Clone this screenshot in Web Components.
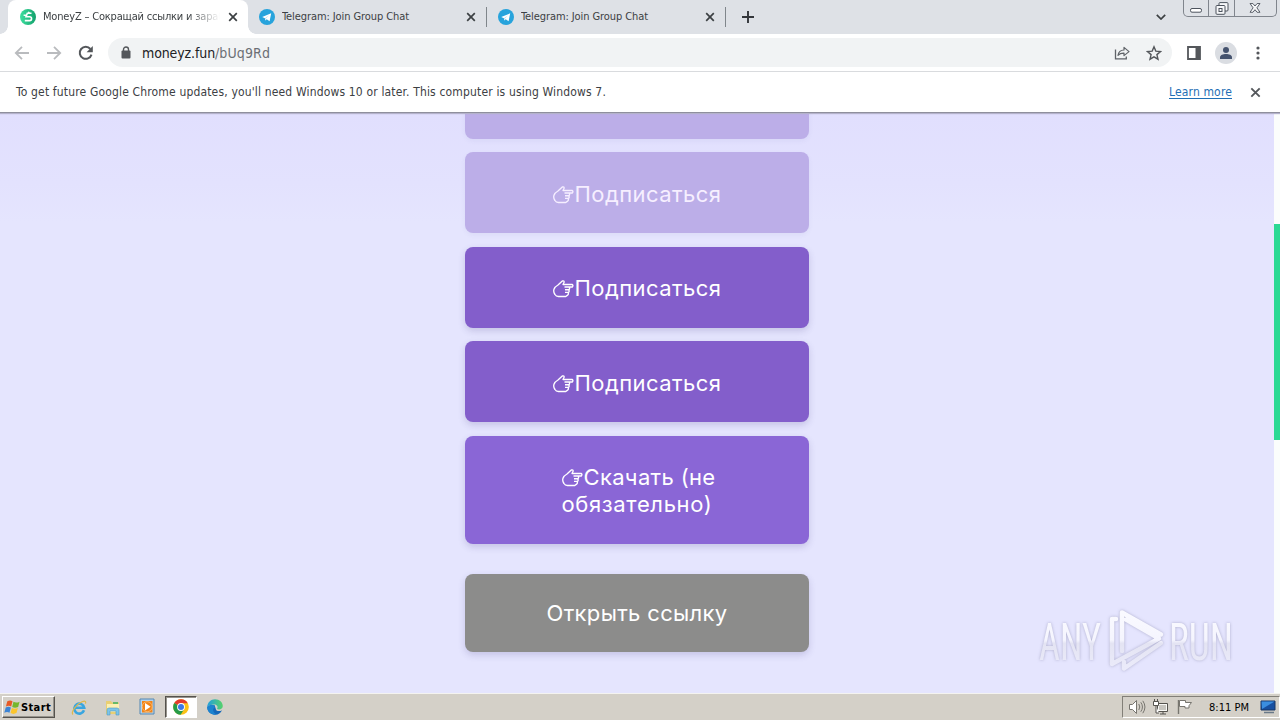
<!DOCTYPE html>
<html lang="ru">
<head>
<meta charset="utf-8">
<title>MoneyZ</title>
<style>
html,body{margin:0;height:100%;overflow:hidden}
body{font-family:"DejaVu Sans Condensed","DejaVu Sans",sans-serif;font-stretch:condensed}
</style>
</head>
<body>
<desktop-screen></desktop-screen>
<script>
const define = (name, html, after) => customElements.define(name, class extends HTMLElement {
  connectedCallback() {
    if (this.shadowRoot) return;
    const t = document.createElement('template');
    t.innerHTML = html;
    this.attachShadow({mode: 'open'}).append(t.content.cloneNode(true));
    if (after) after(this);
  }
});

/* Line of text whose tracking is set so that it fills the width in its "w" attribute. */
define('fit-text', `<style>:host{display:block;white-space:pre;flex:none}span{display:inline-block;text-decoration:inherit}</style><span><slot></slot></span>`, el => {
  const span = el.shadowRoot.querySelector('span');
  const w = +el.getAttribute('w');
  el.style.width = w + 'px';
  const fit = () => {
    span.style.letterSpacing = '0px';
    const natural = span.getBoundingClientRect().width;
    const n = el.textContent.length;
    if (natural && n) span.style.letterSpacing = ((w - natural) / n) + 'px';
  };
  queueMicrotask(fit);
});

const icons = {
  close: ['0 0 10 10', '<path d="M1.2 1.2l7.6 7.6M8.8 1.2L1.2 8.8" stroke="currentColor" stroke-width="1.7"/>'],
  plus: ['0 0 12 12', '<path d="M6 0v12M0 6h12" stroke="currentColor" stroke-width="1.9"/>'],
  money: ['0 0 16 16', '<defs><linearGradient id="g" x2="1"><stop stop-color="#3fe0a0"/><stop offset="1" stop-color="#12a06b"/></linearGradient></defs><circle cx="8" cy="8" r="8" fill="url(#g)"/><path d="M11.5 4.3H7.3L6 7.7h3.6a1.9 1.9 0 0 1 0 3.9H4.8M3.6 6.2h3M9 2.8l-.5 2" fill="none" stroke="#fff" stroke-width="1.6"/>'],
  telegram: ['0 0 16 16', '<circle cx="8" cy="8" r="8" fill="#27a3dc"/><path d="M3.2 7.9l9-3.6-1.6 8-2.9-2.1-1.4 1.4-.4-2.4z" fill="#fff"/><path d="M5.9 9.2l4.2-3-3.4 3.6-.3 1.6z" fill="#b9dcf0"/>'],
  chevron: ['0 0 10 6', '<path d="M.8.8L5 5 9.2.8" fill="none" stroke="#3c4043" stroke-width="1.7"/>'],
  back: ['0 0 16 16', '<path d="M15 8H2M8 1.8L1.8 8 8 14.2" fill="none" stroke="#b9bbbe" stroke-width="1.8"/>'],
  forward: ['0 0 16 16', '<path d="M1 8h13M8 1.8L14.2 8 8 14.2" fill="none" stroke="#b9bbbe" stroke-width="1.8"/>'],
  reload: ['0 0 16 16', '<path d="M13.5 9.6A6 6 0 1 1 12.4 4" fill="none" stroke="#54575b" stroke-width="2"/><path d="M14.8 1v6.2H8.6z" fill="#54575b"/>'],
  lock: ['0 0 10 13', '<rect x=".5" y="4.5" width="9" height="8" rx="1" fill="#54575b"/><path d="M2.5 5V3.5a2.5 2.5 0 0 1 5 0V5" fill="none" stroke="#54575b" stroke-width="1.4"/>'],
  share: ['0 0 16 16', '<path d="M1.5 4.5v9.3h10.8v-2.3" fill="none" stroke="#5f6368" stroke-width="1.3"/><path d="M4 10.3c.6-3.6 2.7-5.2 6-5.3V2.4L15 6.6l-5 4V8.1C7.3 8 5.5 8.7 4 10.3z" fill="none" stroke="#5f6368" stroke-width="1.2" stroke-linejoin="round"/>'],
  star: ['0 0 16 16', '<path d="M8 1.8l1.8 4.3 4.7.4-3.6 3.1 1.1 4.6L8 11.8l-4 2.4 1.1-4.6L1.5 6.5l4.7-.4z" fill="none" stroke="#54575b" stroke-width="1.4"/>'],
  panel: ['0 0 14 14', '<path d="M1 1h12v12H1z" fill="none" stroke="#54575b" stroke-width="1.8"/><path d="M8.5 1H13v12H8.5z" fill="#54575b"/>'],
  avatar: ['0 0 22 22', '<circle cx="11" cy="11" r="11" fill="#dadde2"/><circle cx="11" cy="8" r="3" fill="#45536e"/><path d="M5 17v-1.6c0-2.2 3-3.4 6-3.4s6 1.2 6 3.4V17z" fill="#45536e"/>'],
  dots: ['0 0 4 14', '<g fill="#54575b"><circle cx="2" cy="2" r="1.6"/><circle cx="2" cy="7" r="1.6"/><circle cx="2" cy="12" r="1.6"/></g>'],
  hand: ['0 0 21 19', '<path d="M2 15.500C-.5 12 .8 8.300 5 6L9.300 2q2-.6 1.800 1.300L10 5.500h9.300q1.200 1.200 0 2.500H11.500M16 8q1.200 1.300 0 2.700h-4M15.600 10.700q1.100 1.300 0 2.700H12M15 13.400q1 1.700-.4 2.700L12.800 17.500H5.500Q3 17.300 2 15.500" fill="none" stroke="currentColor" stroke-width="1.350" stroke-linejoin="round"/>'],
  windows: ['0 0 18 17', '<path d="M3.5 2.5c2-1.3 3.8-1.2 5.5-.2L7.6 7.9C5.8 6.9 4 7 2 8.1z" fill="#e75a26"/><path d="M10 2.9c2 1.1 4 1.1 6.5-.1L15 8.4c-2.3 1.2-4.3 1.1-6.3.1z" fill="#75b72d"/><path d="M1.8 9c2-1.2 3.8-1.1 5.5-.1L5.8 14.6C4 13.5 2.2 13.6.3 14.7z" fill="#3c84d5"/><path d="M8.4 9.5c2 1.1 4 1.1 6.3 0L13.2 15c-2.4 1.2-4.3 1.1-6.3 0z" fill="#fbc52c"/>'],
  ie: ['0 0 18 17', '<path d="M14 11.3A5 5 0 1 1 14.200 8.700H5" fill="none" stroke="#3aa6e0" stroke-width="2.600"/><path d="M3 15.500C.5 13.500 6 5.500 12 2.800c3.300-1.300 4.300-.3 3.500 1.800" fill="none" stroke="#e0b84a" stroke-width="1.200"/>'],
  folder: ['0 0 18 17', '<path d="M2 2h5l1 1.5h7V15H2z" fill="#e9cf72"/><path d="M3 5h12v8H3z" fill="#fbf0b3"/><path d="M9 3h5v2H9z" fill="#65b96a"/><path d="M3 16V11q0-2 2-2h8q2 0 2 2v5h-3v-4H6v4z" fill="#7dc4e8" stroke="#4e9cc6" stroke-width=".6"/>'],
  wmp: ['0 0 18 18', '<path d="M2 1h14v15H2z" fill="#b3d3ec" stroke="#5588b5"/><path d="M4 3h10.500v11.500H4z" fill="#f28418"/><circle cx="9.200" cy="8.700" r="5" fill="#f28418" stroke="#fbc27c" stroke-width=".8"/><path d="M7 5v7.400l5.600-3.700z" fill="#fff"/>'],
  chrome: ['0 0 16 16', '<circle cx="8" cy="8" r="7.8" fill="#fbc116"/><path d="M8 8L1.2 4.1A7.8 7.8 0 0 1 14.8 4.2H8z" fill="#e33b2e"/><path d="M1.2 4.1A7.8 7.8 0 0 0 7.6 15.8L11.3 9.9 8 8z" fill="#269b48"/><circle cx="8" cy="8" r="3.9" fill="#fff"/><circle cx="8" cy="8" r="3" fill="#3c78e7"/>'],
  edge: ['0 0 16 16', '<defs><linearGradient id="e" x2="1"><stop stop-color="#229fdd"/><stop offset="1" stop-color="#57d26a"/></linearGradient></defs><path d="M.2 8a7.800 7.800 0 0 0 14.800 3.200C13 12.500 9.500 12.500 9 10.500L7.500 6z" fill="#1568b9"/><path d="M.2 8C.4 3.5 3.8.2 8 .2c4.6 0 7.8 3.2 7.8 6.8 0 3-3.2 4-5.800 3 1.3-2 .3-4.5-2.7-4.5C4 5.5.8 6.500.2 8z" fill="url(#e)"/><path d="M.2 8c1-3 8-3.5 7.500.5C5 10 6 14 9.500 15.600 4 16.500 0 12.500.2 8z" fill="#1c83cf"/>'],
  speaker: ['0 0 18 16', '<path d="M1.5 5.5h3l4-4v13l-4-4h-3z" fill="#fff" stroke="#77756f"/><path d="M10.8 5q2 3 0 6M12.8 3.3q3.3 4.7 0 9.4M14.8 1.8q4.3 6.2 0 12.4" fill="none" stroke="#77756f"/>'],
  network: ['0 0 17 16', '<path d="M5.5 4.5h10v8h-10z" fill="#f8f8f5" stroke="#55534e"/><path d="M7 6h7v5H7z" fill="#c7c5bf"/><path d="M8 15h6M11 13v2" stroke="#55534e"/><path d="M1.5 2.5h5v4h-5zM2.5 0v3M5.5 0v3M4 6.5V14h3" fill="#fff" stroke="#55534e"/>'],
  flag: ['0 0 16 16', '<path d="M1.5 1v14" stroke="#77756f" stroke-width="1.400"/><path d="M2.5 1.5h6v2h6l-2.500 3.200v2.300h-4v-1.500h-5.500z" fill="#fff" stroke="#77756f"/>'],
  monitor: ['0 0 16 14', '<path d="M1 1h14v9H1z" fill="#174fa0" stroke="#183765"/><path d="M1.5 1.5h13L2 9z" fill="#3b8ee0"/><path d="M4 12.5h10" stroke="#6a7988" stroke-width="1.5"/>'],
  minimize: ['0 0 12 5', '<rect x=".5" y=".5" width="11" height="3.7" rx="1.5" fill="#fff" stroke="#4c535d"/>'],
  restore: ['0 0 14 13', '<rect x="4" y=".6" width="9" height="8.4" rx="1" fill="#f6f7f9" stroke="#4c535d"/><rect x="1" y="3.5" width="9" height="8.8" rx="1" fill="#f6f7f9" stroke="#4c535d"/><rect x="4" y="6.5" width="3" height="3" fill="none" stroke="#4c535d"/>'],
  wclose: ['0 0 13 11', '<path d="M1 .6h3.2l2.3 2.7L8.8.6H12L8.6 5.3 12 10.2H8.8L6.5 7.4 4.2 10.2H1l3.4-4.9z" fill="#f6f7f9" stroke="#4c535d"/>']
};
define('ui-icon', `<style>:host{display:block;flex:none}svg{display:block;width:100%;height:100%}</style>`, el => {
  const [box, body] = icons[el.getAttribute('name')];
  el.style.width = el.getAttribute('w') + 'px';
  el.style.height = (el.getAttribute('h') || el.getAttribute('w')) + 'px';
  el.shadowRoot.innerHTML += `<svg viewBox="${box}" aria-hidden="true">${body}</svg>`;
});

define('browser-tab', `<style>
:host{display:flex;align-items:center;box-sizing:border-box;width:239px;height:34px;padding:0 10px 0 12px;font-size:11px;color:#3c4043;position:relative}
:host([active]){width:240px;background:#fff;border-radius:8px 8px 0 0}
:host([active])::before,:host([active])::after{content:"";position:absolute;bottom:0;width:8px;height:8px}
:host([active])::before{left:-8px;background:radial-gradient(circle at 0 0,#dee1e6 7.5px,#fff 8px)}
:host([active])::after{right:-8px;background:radial-gradient(circle at 100% 0,#dee1e6 7.5px,#fff 8px)}
.t{flex:1;margin-left:7px;overflow:hidden;line-height:18px}
:host([active]) .t{-webkit-mask:linear-gradient(90deg,#000 145px,transparent 177px)}
ui-icon{color:#3c4043}
.s{width:1px;height:20px;background:#80868b;margin-left:10px;margin-right:-10px}
:host([active]) .s{display:none}
:host(:not([active])){padding-left:11px}
</style><slot name="icon"></slot><div class="t"><slot></slot></div><ui-icon name="close" w="10"></ui-icon><div class="s"></div>`);

define('window-controls', `<style>
:host{display:flex;box-sizing:border-box;width:94px;height:17px;border:1px solid #80858d;border-top:0;border-radius:0 0 5px 5px;background:#dfe2e7;position:absolute;right:3px;top:0;overflow:hidden}
div{display:flex;justify-content:center;align-items:center;border-right:1px solid #80858d;width:24px}
div:nth-of-type(2){width:25px}div:last-child{flex:1;border:0}
</style><div><ui-icon name="minimize" w="12" h="5" style="margin-top:5px"></ui-icon></div><div><ui-icon name="restore" w="14" h="13"></ui-icon></div><div><ui-icon name="wclose" w="12" h="10" style="margin-right:2px"></ui-icon></div>`);

define('tab-strip', `<style>
:host{display:flex;height:34px;background:#dee1e6;padding-left:8px;position:relative;align-items:center}
.plus{margin-left:16px;color:#33363a}.chev{margin:0 114px 0 auto}
</style>
<browser-tab active><ui-icon slot="icon" name="money" w="16"></ui-icon><fit-text w="187">MoneyZ – Сокращай ссылки и зараба</fit-text></browser-tab>
<browser-tab><ui-icon slot="icon" name="telegram" w="16"></ui-icon><fit-text w="127">Telegram: Join Group Chat</fit-text></browser-tab>
<browser-tab><ui-icon slot="icon" name="telegram" w="16"></ui-icon><fit-text w="127">Telegram: Join Group Chat</fit-text></browser-tab>
<ui-icon class="plus" name="plus" w="12"></ui-icon>
<ui-icon class="chev" name="chevron" w="10" h="6"></ui-icon>
<window-controls></window-controls>`);

define('nav-bar', `<style>
:host{display:flex;align-items:center;box-sizing:border-box;height:38px;background:#fff;border-bottom:1px solid #d9dbde;padding:0 20px 0 14px}
.n{margin-right:16px}
.o{display:flex;align-items:center;flex:1;height:29px;border-radius:15px;background:#f1f3f4;padding:0 10px 0 13px;margin-left:-2px;font-size:14px;color:#202124}
.u{display:flex;flex:1;margin-left:11px;line-height:20px}
.g{color:#6b6f74}
</style>
<ui-icon class="n" name="back" w="16"></ui-icon><ui-icon class="n" name="forward" w="16"></ui-icon><ui-icon class="n" name="reload" w="16"></ui-icon>
<div class="o"><ui-icon name="lock" w="10" h="13"></ui-icon><div class="u"><fit-text w="73">moneyz.fun</fit-text><fit-text class="g" w="55">/bUq9Rd</fit-text></div><ui-icon name="share" w="16"></ui-icon><ui-icon name="star" w="16" style="margin-left:16px"></ui-icon></div>
<ui-icon name="panel" w="14" style="margin-left:15px"></ui-icon><ui-icon name="avatar" w="22" style="margin-left:14px"></ui-icon><ui-icon name="dots" w="4" h="14" style="margin-left:19px"></ui-icon>`);

define('info-bar', `<style>
:host{display:flex;align-items:center;box-sizing:border-box;height:40px;background:#fff;padding:0 19px 0 16px;font-size:12px;color:#3c4043;position:relative;z-index:1;box-shadow:0 1px 0 #8f8f9d,0 2px 1px #b4b2cb}
a{margin-left:auto;color:#1f6fb5;border-bottom:1px solid #1f6fb5;line-height:12px;margin-top:1px}
ui-icon{margin-left:18px;color:#54575b}
</style><fit-text w="590">To get future Google Chrome updates, you'll need Windows 10 or later. This computer is using Windows 7.</fit-text><a><fit-text w="63">Learn more</fit-text></a><ui-icon name="close" w="11"></ui-icon>`);

define('action-button', `<style>
:host{display:flex;box-sizing:border-box;width:344px;height:81px;flex:none;border-radius:8px;background:#835ecb;color:#fff;font:400 22px/27px Inter,sans-serif;font-stretch:normal;align-items:center;justify-content:center;box-shadow:0 3px 7px rgba(70,60,130,.2);padding-top:2px}
:host(.g13){padding-top:4px}
:host([used]){background:#bcaee8;box-shadow:0 2px 5px rgba(70,60,130,.06);color:#f6efff}
:host([download]){background:#8a66d6;height:108px;padding-left:3px}
:host([locked]){background:#8c8c8b;height:78px;padding-top:0}
</style><slot></slot>`);

define('any-run', `<style>:host{display:block;position:absolute;left:1032px;top:492px;width:216px;height:72px}svg{display:block;filter:drop-shadow(0 0 1.5px rgba(120,120,155,.5))}</style>
<svg width="216" height="72" viewBox="1032 605 216 72"><defs><linearGradient id="w" x1="0" y1="612" x2="0" y2="668" gradientUnits="userSpaceOnUse"><stop stop-color="#fafaff"/><stop offset=".5" stop-color="#f5f5fe"/><stop offset=".56" stop-color="#e4e4f3"/><stop offset="1" stop-color="#ebebfa"/></linearGradient></defs>
<g fill="url(#w)" font-family="Roboto,sans-serif" font-weight="400" font-size="51"><text x="1039" y="660" textLength="62" lengthAdjust="spacingAndGlyphs">ANY</text><text x="1169" y="660" textLength="64" lengthAdjust="spacingAndGlyphs">RUN</text></g>
<g fill="none" stroke="url(#w)" stroke-width="4.5" stroke-linejoin="round" stroke-linecap="round"><path d="M1122 651V612.5L1161 634.5M1116 619H1112V664L1159 638.5L1126 619.5M1161 643L1124 668.5V662"/></g></svg>`);

define('web-page', `<style>
:host{display:block;height:580px;overflow:hidden;position:relative;background:linear-gradient(#e1dffe,#e3e2fe 70px,#e5e5fe 110px)}
.col{display:flex;flex-direction:column;align-items:center;width:1274px;margin-top:-55px}
.g13{margin-top:13px}.g14{margin-top:14px}.g30{margin-top:30px}
.row{display:flex;align-items:center}
.row ui-icon{margin-right:1px}
.bar{position:absolute;right:0;top:0;width:6px;height:580px;background:#fbfdfc}
.thumb{height:216px;margin-top:111px;background:#2bd994}
</style>
<div class="col">
<action-button used></action-button>
<action-button used class="g13"><div class="row"><ui-icon name="hand" w="21" h="19"></ui-icon><fit-text w="147">Подписаться</fit-text></div></action-button>
<action-button class="g14"><div class="row"><ui-icon name="hand" w="21" h="19"></ui-icon><fit-text w="147">Подписаться</fit-text></div></action-button>
<action-button class="g13"><div class="row"><ui-icon name="hand" w="21" h="19"></ui-icon><fit-text w="147">Подписаться</fit-text></div></action-button>
<action-button download class="g14"><div><div class="row"><ui-icon name="hand" w="21" h="19"></ui-icon><fit-text w="132">Скачать (не</fit-text></div><fit-text w="151">обязательно)</fit-text></div></action-button>
<action-button locked class="g30"><fit-text w="181">Открыть ссылку</fit-text></action-button>
</div>
<div class="bar"><div class="thumb"></div></div>
<any-run></any-run>`);

define('task-bar', `<style>
:host{display:flex;align-items:center;box-sizing:border-box;height:27px;background:#d4d0c8;border-top:1px solid #f4f3f0;padding-left:2px;font-size:11px;color:#000}
.start{display:flex;align-items:center;box-sizing:border-box;width:53px;height:22px;border:1px solid;border-color:#fff #55524d #55524d #fff;box-shadow:inset -1px -1px #96938c;padding-left:1px;font-weight:bold}
.q{display:flex;justify-content:center;align-items:center;width:34px;height:22px}
.q.first{margin-left:7px}
.on{box-sizing:border-box;width:32px;margin:0 1px;background:#fff;border:1px solid;border-color:#55524d #fff #fff #55524d;box-shadow:inset 1px 1px #96938c}
.tray{display:flex;align-items:center;box-sizing:border-box;width:158px;height:22px;margin-left:auto;border:1px solid;border-color:#827f78 #fff #fff #827f78;padding-left:5px}
</style>
<div class="start"><ui-icon name="windows" w="17" h="16"></ui-icon><fit-text w="30">Start</fit-text></div>
<div class="q first"><ui-icon name="ie" w="18" h="17"></ui-icon></div><div class="q"><ui-icon name="folder" w="18" h="17"></ui-icon></div><div class="q"><ui-icon name="wmp" w="18"></ui-icon></div><div class="q on"><ui-icon name="chrome" w="16"></ui-icon></div><div class="q"><ui-icon name="edge" w="16"></ui-icon></div>
<div class="tray"><ui-icon name="speaker" w="18" h="16"></ui-icon><ui-icon name="network" w="17" h="16" style="margin-left:6px"></ui-icon><ui-icon name="flag" w="16" style="margin-left:8px"></ui-icon><fit-text w="40" style="margin-left:16px">8:11 PM</fit-text><ui-icon name="monitor" w="16" h="14" style="margin-left:11px"></ui-icon></div>`);

define('desktop-screen', `<style>:host{display:flex;flex-direction:column;width:1280px;height:720px;overflow:hidden}:host>*{flex:none}info-bar{margin-bottom:1px}</style>
<tab-strip></tab-strip><nav-bar></nav-bar><info-bar></info-bar><web-page></web-page><task-bar></task-bar>`);
</script>
</body>
</html>
